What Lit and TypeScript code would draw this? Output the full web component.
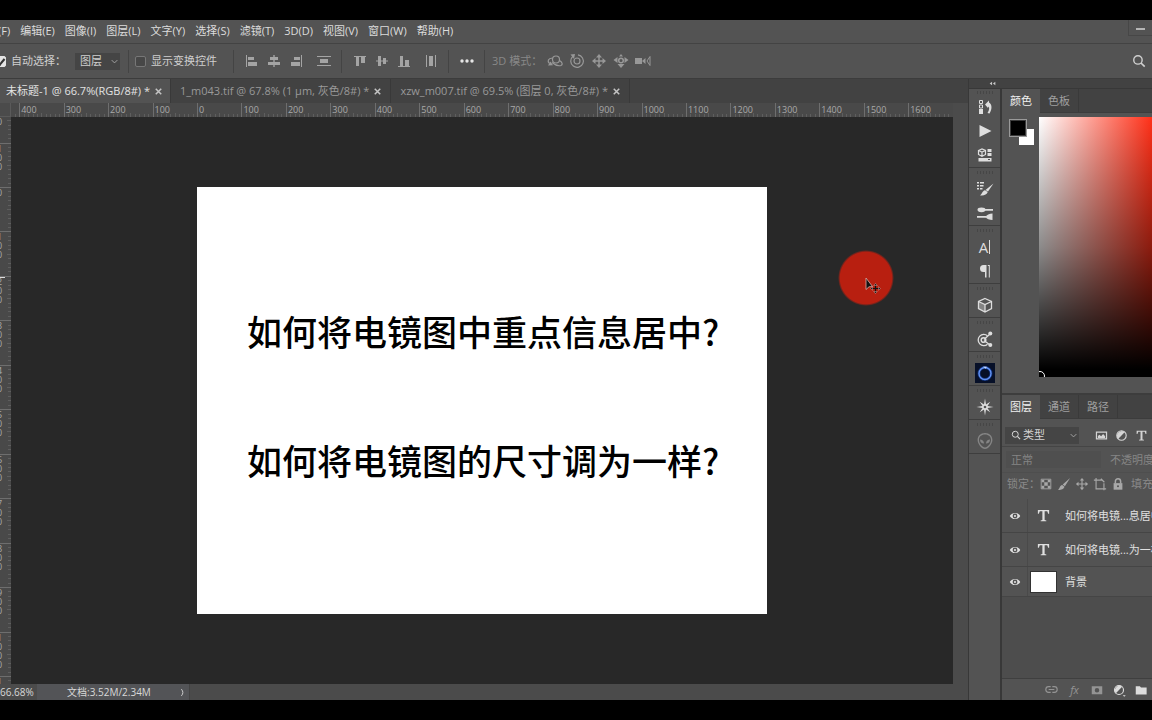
import { LitElement, html, svg, css, nothing } from "lit";
import { customElement, property } from "lit/decorators.js";

const STEP = 44.45;

type Layer = { name: string; kind: "text" | "image" };

const MENUS = ["文件(F)", "编辑(E)", "图像(I)", "图层(L)", "文字(Y)", "选择(S)", "滤镜(T)", "3D(D)", "视图(V)", "窗口(W)", "帮助(H)"];
const TABS = ["未标题-1 @ 66.7%(RGB/8#) *", "1_m043.tif @ 67.8% (1 μm, 灰色/8#) *", "xzw_m007.tif @ 69.5% (图层 0, 灰色/8#) *"];
const LAYERS: Layer[] = [
  { name: "如何将电镜...息居中?", kind: "text" },
  { name: "如何将电镜...为一样?", kind: "text" },
  { name: "背景", kind: "image" },
];

const GLYPHS: Record<string, unknown> = {
  alignLeft: svg`<path d="M2.5 2v12" stroke="currentColor"/><path d="M4 4h6v3H4zM4 9h9v4H4z"/>`,
  alignCenter: svg`<path d="M8 2v12" stroke="currentColor" stroke-width="1.400"/><path d="M4 4h8v3H4zM2 9h12v3H2z"/>`,
  alignRight: svg`<path d="M13.500 2v12" stroke="currentColor"/><path d="M6 4h6v3H6zM3 9h9v4H3z"/>`,
  distribute: svg`<path d="M1 3h14v1H1zM1 12h14v1H1zM4 6h8v4H4z"/>`,
  alignTop: svg`<path d="M2 3h12v1H2zM4 4h3v9H4zM9 4h4v6H9z"/>`,
  alignMiddle: svg`<path d="M2 7.500h12v1H2zM4 3h3v10H4zM9 5h3v6H9z"/>`,
  alignBottom: svg`<path d="M2 13h12v1H2zM4 3h3v10H4zM9 7h4v6H9z"/>`,
  distributeV: svg`<path d="M3 2h1v12H3zM12 2h1v12h-1zM6 3h4v10H6z"/>`,
  more: svg`<circle cx="3" cy="8" r="1.700"/><circle cx="8" cy="8" r="1.700"/><circle cx="13" cy="8" r="1.700"/>`,
  orbit: svg`<g fill="none" stroke="currentColor" stroke-width="1.200"><circle cx="9" cy="6.500" r="3.500"/><path d="M5.500 5C1 5.500 0 8 2.500 10.500M12.500 7.500c3 2 3.500 4 1.500 5-2 .6-6-.5-9-3"/></g><path d="M1 12.500l5-.3-2.500-3.700z"/>`,
  roll: svg`<g fill="none" stroke="currentColor" stroke-width="1.200"><circle cx="8" cy="8" r="3"/><path d="M4 3.200A6.300 6.300 0 1 0 9 1.800"/></g><path d="M1.500 1.500L6 1l-1 5z"/>`,
  pan: svg`<path d="M8 1l3 3.500H5zM8 15l3-3.500H5zM1 8l3.500-3v6zM15 8l-3.500-3v6z"/><path d="M8 4v8M4 8h8" stroke="currentColor" stroke-width="1.500"/>`,
  slide: svg`<path d="M8 15l3.500-4h-7zM0.500 7l4-3v6zM15.500 7l-4-3v6zM8 1l2 2.500H6z"/><circle cx="8" cy="7.500" r="2.300" fill="none" stroke="currentColor" stroke-width="1.500"/>`,
  camera: svg`<path d="M0 5h7v6H0zM7 8l3.500-3v6z"/><path d="M15 3.500L12 8l3 4.500V3.500z" fill="none" stroke="currentColor"/>`,
  search: svg`<circle cx="6.800" cy="6.800" r="4.800" fill="none" stroke="currentColor" stroke-width="1.600"/><path d="M10.300 10.300L14.500 14.500" stroke="currentColor" stroke-width="1.900"/>`,
  history: svg`<path d="M2.500 1.500h3v3h-3zM2.500 6h3v3h-3z" fill="none" stroke="currentColor"/><path d="M2 10h4v5H2zM8 5.500L12 1.500v2c3 2 3.500 6 .5 11l-2-.5c2-3.500 2-5.500 1-6.500l-.5 1.500z"/>`,
  play: svg`<path d="M2.500 2L14.500 8 2.500 14z"/>`,
  library: svg`<path d="M1.500 3.500L5 2l3.500 1.500v4L5 9.300 1.500 7.500zM1.500 3.500L5 5l3.500-1.500M5 5v4" fill="none" stroke="currentColor" stroke-width="1.200"/><path d="M10.500 2h4v3h-4zM10.500 6h4v3h-4zM1.500 11h13v3.500h-13z"/><path d="M11 12.500h2" stroke="#535353"/>`,
  brushes: svg`<path d="M0 1h2v1.500H0zM3 1h4v1.500H3zM0 4h2v1.500H0zM3 4h3.500v1.500H3zM0 7h2v1.500H0zM3 7h2.500v1.500H3zM16.500 2.500l-5.500 8-2.500-1.500zM8 9.300l2.700 1.800C10 14 6 15 3 14.300 5.500 13 5 10 8 9.300z"/>`,
  brushSet: svg`<path d="M8 4h8v1.800H8zM0 11h9v1.800H0z"/><ellipse cx="4.500" cy="4.800" rx="4" ry="2.400"/><path d="M15.500 8.500v6.500c-3 0-6-1-7-3 1-2 4-3.500 7-3.500z"/>`,
  paragraph: svg`<path d="M9 2H6.500a3.500 3.500 0 0 0 0 7H8v5.500h1.500V2zM10.800 2h2v12.500h-1V3h-1z"/>`,
  cube: svg`<path d="M8 1.500L14.500 4.500v7L8 15 1.500 11.500v-7zM1.500 4.500L8 7.500l6.500-3M8 7.500V15" fill="none" stroke="currentColor" stroke-width="1.300"/><path d="M1.500 4.500L8 7.500V15l-6.500-3.500z" opacity=".35"/>`,
  measure: svg`<path d="M10.500 4.800A5.600 5.600 0 1 0 10.500 13.200" fill="none" stroke="currentColor" stroke-width="1.300"/><circle cx="6.500" cy="9" r="2.300" fill="none" stroke="currentColor" stroke-width="1.500"/><path d="M7 8.500L13 3M7 9.500l6 4.500" stroke="currentColor" stroke-width="1.300"/><circle cx="13.300" cy="2.500" r="2"/><circle cx="13.300" cy="14" r="2"/>`,
  star: svg`<path d="M8-.5l1 6L13.200 2.800 10.500 7 16.500 8l-6 1 2.700 4.200L9 10.500 8 16.500l-1-6-4.200 2.700L5.500 9l-6-1 6-1-2.700-4.200L7 5.500z"/><circle cx="8" cy="8" r="1.300" fill="#535353"/>`,
  alien: svg`<path d="M8 0C3.500 0 .6 3 .6 7c0 4 4 9 7.400 9s7.400-5 7.400-9C15.400 3 12.500 0 8 0zm0 1.500c3.700 0 6 2.300 6 5.500 0 3.500-3.500 7.500-6 7.500S2 10.500 2 7c0-3.200 2.300-5.500 6-5.500z"/><path d="M3 6.500c2 0 4 1.500 4 4-2.500 0-4-1.500-4-4zM13 6.500c-2 0-4 1.500-4 4 2.500 0 4-1.500 4-4z"/>`,
  picture: svg`<path d="M1.800 3.800h12.400v8.400H1.800z" fill="none" stroke="currentColor" stroke-width="1.500"/><path d="M3.500 11V8.500L5.500 7l2 1.800L10 6l2.500 3v2z"/>`,
  adjust: svg`<circle cx="8" cy="8" r="5.800" fill="none" stroke="currentColor" stroke-width="1.400"/><path d="M12.200 3.800A6 6 0 0 0 3.800 12.200z"/>`,
  adjustMenu: svg`<circle cx="8" cy="8" r="6" fill="none" stroke="currentColor" stroke-width="1.500"/><path d="M12.200 3.800A6 6 0 0 0 3.800 12.200zM13 15h4l-2 2z"/>`,
  type: svg`<path d="M2 2h12v4h-1l-1-2.500H9.200v9.300l1.800.5v.7H5v-.7l1.800-.5V3.500H4L3 6H2z"/>`,
  checker: svg`<path d="M2.500 2.500h11v11h-11z" fill="none" stroke="currentColor"/><path d="M3 3h3v3H3zM10 3h3v3h-3zM6 6h4v4H6zM3 10h3v3H3zM10 10h3v3h-3z"/>`,
  brush: svg`<path d="M15 1L9 10.500 6.500 8.500zM6 9.200l2.500 1.900c-.5 3-5 4-7.500 3.600 2.500-1.500 2-5 5-5.500z"/>`,
  move: svg`<path d="M8 1l2.500 3h-5zM8 15l2.500-3h-5zM1 8l3-2.500v5zM15 8l-3-2.500v5z"/><path d="M8 3v10M3 8h10" stroke="currentColor" stroke-width="1.300"/>`,
  artboard: svg`<path d="M3.500 1v12.500H15M1 3.500h9M12.500 15V7M9 2l4 4" fill="none" stroke="currentColor" stroke-width="1.300"/>`,
  lock: svg`<path d="M3 7h10v7.500H3z"/><path d="M5 7.500V5a3 3 0 0 1 6 0v2.500" fill="none" stroke="currentColor" stroke-width="1.700"/><circle cx="8" cy="10.500" r="1.100" fill="#4d4d4d"/>`,
  eye: svg`<path d="M1 8C4 2.500 12 2.500 15 8c-3 5.500-11 5.500-14 0zm7-3.200a3.200 3.200 0 1 0 0 6.400 3.200 3.200 0 0 0 0-6.400z" fill-rule="evenodd"/><circle cx="8" cy="8" r="1.400"/>`,
  link: svg`<path d="M7 4.500H4.500a3.500 3.500 0 0 0 0 7H7M9 4.500h2.500a3.500 3.500 0 0 1 0 7H9M4.500 8h7" fill="none" stroke="currentColor" stroke-width="1.400"/>`,
  mask: svg`<path d="M1 3h14v10.500H1zM8 5.200a3 3 0 1 0 0 6 3 3 0 0 0 0-6z" fill-rule="evenodd"/>`,
  folder: svg`<path d="M1 3h5.500L8 4.800h7.500V14H1z"/>`,
  chevron: svg`<path d="M3 5.500l5 5 5-5" fill="none" stroke="currentColor" stroke-width="1.700"/>`,
  next: svg`<path d="M6 2c3.500 4 3.500 8 0 12" fill="none" stroke="currentColor" stroke-width="1.600"/>`,
  collapse: svg`<path d="M7 4v8L1.500 8zM14.500 4v8L9 8z"/>`,
  close: svg`<path d="M4 4l8 8M12 4l-8 8" stroke="currentColor" stroke-width="2.200"/>`,
};

const shared = css`
  * { box-sizing: border-box; }
  button, select, input { font: inherit; color: inherit; margin: 0; padding: 0; border: 0; background: none; border-radius: 0; }
  button { display: flex; align-items: center; justify-content: center; white-space: nowrap; flex: none; }
  label { white-space: nowrap; }
`;

@customElement("ps-icon")
class PsIcon extends LitElement {
  @property() name = "";
  @property({ type: Number }) size = 14;
  static styles = css`
    :host { display: flex; flex: none; }
    svg { display: block; fill: currentColor; overflow: visible; }
  `;
  render() {
    return html`<svg width=${this.size} height=${this.size} viewBox="0 0 16 16" aria-hidden="true">${GLYPHS[this.name]}</svg>`;
  }
}

@customElement("ps-select")
class PsSelect extends LitElement {
  @property() value = "";
  @property() label = "";
  @property() icon = "";
  @property({ type: Boolean }) disabled = false;
  static styles = [shared, css`
    :host { display: grid; align-items: center; flex: none; height: 17px; background: #454545; }
    select { appearance: none; grid-area: 1 / 1; width: 100%; height: 100%; padding-left: 5px; opacity: 1; outline: 0; }
    .with-icon { padding-left: 18px; }
    .lead { grid-area: 1 / 1; margin-left: 6px; pointer-events: none; }
    .arrow { grid-area: 1 / 1; justify-self: end; margin-right: 1px; pointer-events: none; color: #a5a5a5; }
  `];
  render() {
    return html`
      <select class=${this.icon ? "with-icon" : ""} aria-label=${this.label} ?disabled=${this.disabled}><option>${this.value}</option></select>
      ${this.icon ? html`<ps-icon class="lead" name=${this.icon} size="10"></ps-icon>` : nothing}
      ${this.disabled ? nothing : html`<ps-icon class="arrow" name="chevron" size="9"></ps-icon>`}`;
  }
}

@customElement("ps-menubar")
class PsMenubar extends LitElement {
  static styles = [shared, css`
    :host { display: flex; justify-content: space-between; height: 24px; border-bottom: 1px solid #434343; overflow: hidden; flex: none; }
    nav { display: flex; gap: 10px; margin-left: -24px; color: #dcdcdc; }
    button { height: 22px; }
    .min { width: 24px; height: 16px; border: solid #474747; border-width: 0 0 1px 1px; padding-top: 3px; }
    .bar { width: 9px; height: 2px; background: #b5b5b5; }
  `];
  render() {
    return html`<nav>${MENUS.map((m) => html`<button>${m}</button>`)}</nav>
      <button class="min" aria-label="最小化"><span class="bar"></span></button>`;
  }
}

@customElement("ps-options")
class PsOptions extends LitElement {
  static styles = [shared, css`
    :host { display: flex; align-items: center; height: 35px; border-bottom: 1px solid #3c3c3c; flex: none; overflow: hidden; color: #cfcfcf; }
    .check { appearance: none; width: 11px; height: 11px; border: 1px solid #777; border-radius: 2px; background: #474747; display: grid; place-items: center; flex: none; }
    .check:checked { background: #e4e4e4; border-color: #e4e4e4; margin-left: -5px; }
    .check:checked::after { content: ""; width: 3px; height: 7px; border: solid #333; border-width: 0 2px 2px 0; transform: rotate(40deg); }
    label { margin-left: 5px; }
    .target { width: 45px; margin-left: 9px; }
    .rule { width: 1px; height: 23px; background: #444; flex: none; }
    .transform { margin-left: 6px; }
    .group { display: flex; gap: 6px; color: #a4a4a4; }
    .one { margin: 0 9px 0 12px; }
    .first { margin-left: 10px; }
    .second { margin: 0 11px 0 10px; }
    .after { margin-left: 8px; }
    .spread { margin-right: 9px; }
    .dots { margin: 0 9px 0 10px; color: #e6e6e6; }
    .mode { margin-left: 7px; color: #888; white-space: nowrap; }
    .modes { margin-left: 5px; color: #989898; }
    .search { margin: 0 6px 0 auto; color: #d0d0d0; }
    .end { margin-left: 16px; }
  `];
  render() {
    const row = (names: string[]) => names.map((n) => html`<button aria-label=${n}><ps-icon name=${n} size="16"></ps-icon></button>`);
    return html`
      <input class="check" id="auto" type="checkbox" checked><label for="auto">自动选择：</label>
      <ps-select class="target" label="自动选择" value="图层"></ps-select>
      <span class="rule after"></span>
      <input class="check transform" id="tr" type="checkbox"><label for="tr">显示变换控件</label>
      <span class="rule end"></span>
      <div class="group first">${row(["alignLeft", "alignCenter", "alignRight"])}</div>
      <div class="group one">${row(["distribute"])}</div>
      <span class="rule"></span>
      <div class="group second">${row(["alignTop", "alignMiddle", "alignBottom"])}</div>
      <div class="group spread">${row(["distributeV"])}</div>
      <span class="rule"></span>
      <button class="dots" aria-label="更多"><ps-icon name="more" size="16"></ps-icon></button>
      <span class="rule"></span>
      <span class="mode">3D 模式：</span>
      <div class="group modes">${row(["orbit", "roll", "pan", "slide", "camera"])}</div>
      <button class="search" aria-label="搜索"><ps-icon name="search"></ps-icon></button>`;
  }
}

@customElement("ps-document")
class PsDocument extends LitElement {
  static styles = [shared, css`
    :host { display: flex; flex-direction: column; min-width: 0; background: #4b4b4b; }
    .tabs { display: flex; height: 24px; background: #424242; flex: none; overflow: hidden; }
    .tab { display: flex; align-items: center; justify-content: space-between; gap: 3px; padding: 0 6px; border-right: 1px solid #393939; color: #999; height: 24px; }
    .tab + .tab { padding: 0 7px 0 9px; }
    .active { background: #535353; color: #e2e2e2; }
    .close { color: #c4c4c4; }
    .grid { flex: 1; min-height: 0; display: grid; grid-template: 14px 1fr / 11px 1fr 15px; }
    .ruler { background: #494949; display: block; width: 100%; height: 100%; overflow: hidden; font-size: 9px; fill: #aaa; }
    .corner { border: solid #5a5a5a; border-width: 0 1px 1px 0; }
    .view { position: relative; overflow: hidden; background: #282828; display: flex; align-items: center; justify-content: center; min-height: 0; }
    .paper { background: #fff; color: #000; width: 570px; height: 427px; flex: none; display: flex; flex-direction: column; gap: 89px; padding: 124px 0 0 50px; font-size: 35px; line-height: 40px; font-weight: 500; font-family: "Noto Sans CJK SC", sans-serif; white-space: nowrap; }
    .paper p { margin: 0; }
    .pointer { position: absolute; left: 827px; top: 133px; width: 56px; height: 56px; overflow: visible; }
    .status { display: flex; height: 16px; flex: none; color: #d8d8d8; font-size: 10px; line-height: 16px; background: #4b4b4b; }
    .zoom { width: 37px; flex: none; }
    .info { display: flex; align-items: center; justify-content: space-between; width: 153px; padding: 0 2px 0 30px; background: #535457; border-right: 1px solid #444; }
  `];

  private ticks(vertical: boolean) {
    const origin = vertical ? 70 : 186;
    const depth = vertical ? 11 : 14;
    const from = vertical ? -2 : -5;
    const to = vertical ? 12 : 17;
    const out = [];
    for (let i = from * 10; i < to * 10; i++) {
      const at = origin + (i * STEP) / 10;
      const major = i % 10 === 0;
      const len = major ? depth : i % 5 === 0 ? 4 : 3;
      const line = vertical ? `M${depth - len} ${Math.round(at)}.5h${len}` : `M${Math.round(at)}.5 ${depth - len}v${len}`;
      out.push(svg`<path d=${line} stroke=${major ? "#6e6e6e" : "#5e5e5e"}/>`);
      if (!major) continue;
      const text = String(Math.abs(i * 10));
      if (vertical) out.push([...text].map((c, n) => svg`<text x="-3" y=${at + 9 + n * 9}>${c}</text>`));
      else out.push(svg`<text x=${at + 2} y="10">${text}</text>`);
    }
    return out;
  }

  render() {
    return html`
      <div class="tabs">${TABS.map((t, i) => html`
        <div class="tab ${i === 0 ? "active" : ""}"><button>${t}</button><button class="close" aria-label="关闭"><ps-icon name="close" size="11"></ps-icon></button></div>`)}
      </div>
      <div class="grid">
        <div class="corner"></div>
        <svg class="ruler">${this.ticks(false)}</svg>
        <div></div>
        <svg class="ruler">${this.ticks(true)}<path d="M0 160.500h5" stroke="#ddd"/></svg>
        <div class="view">
          <div class="paper"><p>如何将电镜图中重点信息居中?</p><p>如何将电镜图的尺寸调为一样?</p></div>
          <svg class="pointer" viewBox="0 0 56 56">
            <radialGradient id="spot"><stop offset=".92" stop-color="#b81f10"/><stop offset="1" stop-color="#b81f10" stop-opacity="0"/></radialGradient>
            <circle cx="28" cy="28" r="28" fill="url(#spot)"/>
            <path d="M28 28v11.500l3-2.700 3.500-.3z" fill="#111" stroke="#d9a9a4" stroke-width=".8"/>
            <path d="M37.500 34v9M33 38.500h9" stroke="#111" stroke-width="1.200"/>
            <path d="M37.500 33.500l1.800 2h-3.600zM37.500 43.500l1.800-2h-3.600zM32.500 38.500l2-1.800v3.600zM42.500 38.500l-2-1.800v3.600z" fill="#111" stroke="#d9a9a4" stroke-width=".5"/>
          </svg>
        </div>
        <div></div>
      </div>
      <div class="status"><span class="zoom">66.68%</span><div class="info"><span>文档:3.52M/2.34M</span><ps-icon name="next" size="9"></ps-icon></div></div>`;
  }
}

@customElement("ps-rail")
class PsRail extends LitElement {
  static styles = [shared, css`
    :host { display: block; width: 34px; background: #535353; border: solid #383838; border-width: 0 2px 0 1px; color: #dedede; }
    .group { border-bottom: 1px solid #3e3e3e; display: flex; flex-direction: column; padding-top: 9px; }
    .group:first-child { padding-top: 6px; }
    .group::before { content: ""; width: 16px; height: 3px; margin: -6px auto 3px; background: repeating-linear-gradient(90deg, #464646 0 1px, #535353 1px 3px); flex: none; }
    .group:first-child::before { margin: -4px auto 1px; }
    button { height: 24px; width: 100%; }
    .letter { font-size: 15px; gap: 1px; font-family: "Open Sans", sans-serif; }
    .caret { width: 1px; height: 14px; background: #dedede; }
    .plugin { width: 20px; height: 20px; background: #071028; display: block; }
    .off { color: #858585; }
  `];
  render() {
    const b = (n: string, cls = "") => html`<button class=${cls} aria-label=${n}><ps-icon name=${n} size="16"></ps-icon></button>`;
    return html`
      <div class="group">${b("history")}${b("play")}${b("library")}</div>
      <div class="group">${b("brushes")}${b("brushSet")}</div>
      <div class="group"><button class="letter">A<span class="caret"></span></button>${b("paragraph")}</div>
      <div class="group">${b("cube")}</div>
      <div class="group">${b("measure")}</div>
      <div class="group"><button aria-label="插件"><svg class="plugin" viewBox="0 0 20 20">
        <circle cx="10" cy="10.500" r="6" fill="none" stroke="#1b4fc0" stroke-width="3" opacity=".5"/>
        <circle cx="10" cy="10.500" r="6" fill="none" stroke="#6393f5" stroke-width="1.400"/>
        <path d="M8 3.500l4 .3-1.500 2z" fill="#c5d8ff"/></svg></button></div>
      <div class="group">${b("star")}</div>
      <div class="group">${b("alien", "off")}</div>`;
  }
}

@customElement("ps-panels")
class PsPanels extends LitElement {
  static styles = [shared, css`
    :host { display: flex; flex-direction: column; min-width: 0; overflow: hidden; background: #535353; color: #d4d4d4; }
    .tabs { display: flex; height: 24px; background: #424242; border-bottom: 1px solid #3c3c3c; flex: none; }
    .tabs button { padding: 0 8px; height: 23px; color: #a0a0a0; border-right: 1px solid #3a3a3a; }
    .tabs .on { background: #535353; color: #f0f0f0; height: 24px; border: 0; }
    .color { display: flex; height: 280px; padding-top: 4px; flex: none; }
    .swatches { width: 37px; display: grid; grid-template: 10px 8px 8px / 10px 8px 7px; padding: 2px 0 0 7px; align-content: start; flex: none; }
    .fg { grid-area: 1 / 1 / 3 / 3; background: #000; border: 2px solid #3a3a3a; outline: 1px solid #999; outline-offset: -1px; z-index: 1; }
    .bg { grid-area: 2 / 2 / 4 / 4; background: #fff; }
    .ramp { flex: 1; height: 260px; overflow: hidden; background: linear-gradient(to bottom, transparent 0%, rgba(0,0,0,.45) 50%, #000 97%), linear-gradient(to right, #fff, #ff3018); }
    .ring { display: block; }
    .layers { display: flex; flex-direction: column; flex: 1; min-height: 0; border-top: 2px solid #3d3d3d; }
    .row { display: flex; align-items: center; flex: none; white-space: nowrap; overflow: hidden; }
    .filter { height: 28px; padding: 5px 0 0 3px; border-bottom: 1px solid #454545; }
    .kind { width: 74px; margin-right: 16px; }
    .icons { display: flex; gap: 7px; }
    .blend { height: 26px; padding-left: 4px; color: #858585; border-bottom: 1px solid #4e4e4e; }
    .mode { width: 95px; background: #4f4f4f; margin-right: 9px; }
    .lockrow { height: 26px; padding: 0 0 4px 5px; color: #898989; }
    .locks { display: flex; gap: 4px; margin: 0 6px 0 -1px; color: #a8a8a8; }
    .list { flex: 1; background: #4d4d4d; }
    .layer { height: 34px; border-bottom: 1px solid #454545; background: #535353; color: #e0e0e0; }
    .layer.image { height: 30px; }
    .vis { width: 26px; height: 100%; border-right: 1px solid #4a4a4a; }
    .thumb { width: 37px; display: flex; justify-content: center; flex: none; margin: 0 3px 0 -3px; }
    .white { width: 25px; height: 20px; background: #fff; outline: 1px solid #333; }
    .foot { height: 22px; border-top: 1px solid #3f3f3f; padding-left: 43px; gap: 10px; color: #949494; }
    .fx { font-size: 11px; width: 13px; font-style: italic; line-height: 12px; }
    .lit { color: #dcdcdc; }
  `];
  render() {
    return html`
      <div class="tabs"><button class="on">颜色</button><button>色板</button></div>
      <div class="color">
        <div class="swatches"><button class="fg" aria-label="前景色"></button><button class="bg" aria-label="背景色"></button></div>
        <div class="ramp"><svg class="ring" width="10" height="260" viewBox="0 0 10 260"><circle cx="1" cy="259" r="4.500" fill="none" stroke="#fff"/></svg></div>
      </div>
      <div class="layers">
        <div class="tabs"><button class="on">图层</button><button>通道</button><button>路径</button></div>
        <div class="row filter">
          <ps-select class="kind" label="过滤" icon="search" value="类型"></ps-select>
          <div class="icons">${["picture", "adjust", "type"].map((n) => html`<button aria-label=${n}><ps-icon name=${n} size="13"></ps-icon></button>`)}</div>
        </div>
        <div class="row blend"><ps-select class="mode" label="混合模式" value="正常" disabled></ps-select><span>不透明度：</span></div>
        <div class="row lockrow"><span>锁定：</span>
          <div class="locks">${["checker", "brush", "move", "artboard", "lock"].map((n) => html`<button aria-label=${n}><ps-icon name=${n} size="14"></ps-icon></button>`)}</div>
          <span>填充：</span></div>
        <div class="list">${LAYERS.map((l) => html`
          <div class="row layer ${l.kind}">
            <button class="vis" aria-label="可见性"><ps-icon name="eye" size="12"></ps-icon></button>
            <span class="thumb">${l.kind === "text" ? html`<ps-icon name="type" size="15"></ps-icon>` : html`<span class="white"></span>`}</span>
            <span>${l.name}</span>
          </div>`)}
        </div>
        <div class="row foot">
          <button aria-label="链接"><ps-icon name="link" size="13"></ps-icon></button>
          <button class="fx">fx</button>
          <button aria-label="蒙版"><ps-icon name="mask" size="12"></ps-icon></button>
          <button class="lit" aria-label="调整"><ps-icon name="adjustMenu" size="12"></ps-icon></button>
          <button class="lit" aria-label="新建组"><ps-icon name="folder" size="12"></ps-icon></button>
        </div>
      </div>`;
  }
}

@customElement("app-root")
class AppRoot extends LitElement {
  static styles = [shared, css`
    :host { display: flex; flex-direction: column; height: 100vh; padding: 20px 0; background: #000; box-sizing: border-box; overflow: hidden; font: 11px/16px "Open Sans", "Noto Sans CJK SC", sans-serif; color: #d6d6d6; }
    .menu, .options { background: #535353; }
    .main { flex: 1; min-height: 0; display: grid; grid-template-columns: 1fr 184px; }
    .dock { display: grid; grid-template: 10px 1fr / 34px 1fr; min-width: 0; min-height: 0; }
    .head { grid-column: 1 / 3; background: #424242; border: solid #383838; border-width: 0 0 1px 1px; padding-left: 20px; color: #c8c8c8; display: flex; align-items: center; }
  `];
  render() {
    return html`
      <ps-menubar class="menu"></ps-menubar>
      <ps-options class="options"></ps-options>
      <div class="main">
        <ps-document></ps-document>
        <div class="dock">
          <div class="head"><button aria-label="折叠"><ps-icon name="collapse" size="7"></ps-icon></button></div>
          <ps-rail></ps-rail>
          <ps-panels></ps-panels>
        </div>
      </div>`;
  }
}
